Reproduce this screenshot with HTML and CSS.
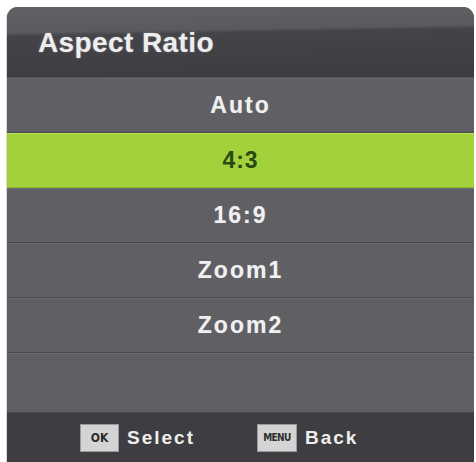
FILE: index.html
```html
<!DOCTYPE html>
<html>
<head>
<meta charset="utf-8">
<link rel="stylesheet" href="styles.css">
</head>
<body>
<div class="panel">
  <div class="header"><span class="title">Aspect Ratio</span></div>
  <div class="list">
    <div class="row">Auto</div>
    <div class="row selected">4:3</div>
    <div class="row">16:9</div>
    <div class="row">Zoom1</div>
    <div class="row">Zoom2</div>
    <div class="row empty"></div>
  </div>
  <div class="footer">
    <div class="hint"><span class="key key-ok">OK</span><span class="label">Select</span></div>
    <div class="hint"><span class="key key-menu">MENU</span><span class="label">Back</span></div>
  </div>
</div>
</body>
</html>
```

FILE: styles.css
```css
html, body {
  margin: 0;
  padding: 0;
  background: #ffffff;
}
body {
  font-family: "Liberation Sans", Arial, sans-serif;
  font-weight: bold;
  color: #f2f2f2;
}
.panel {
  margin: 7px 2px 0 7px;
  width: 467px;
  height: 455px;
  border-radius: 11px 11px 0 0;
  overflow: hidden;
  background: #5e5e62;
  display: flex;
  flex-direction: column;
  box-shadow: -1px 0 0 #d8d8d8;
}
.header {
  height: 70px;
  flex: none;
  display: flex;
  align-items: center;
  padding-left: 31px;
  background: linear-gradient(179deg, #626266 0%, #5a5a5e 33%, #444448 38%, #3d3d41 100%);
  border-bottom: 1px solid #505054;
}
.title {
  font-size: 28px;
  letter-spacing: 0.4px;
  color: #eeeeee;
  text-shadow: 0 0 2px rgba(255,255,255,0.35);
  margin-top: 2px;
}
.list {
  display: flex;
  flex-direction: column;
}
.row {
  height: 54px;
  flex: none;
  display: flex;
  align-items: center;
  justify-content: center;
  font-size: 23px;
  letter-spacing: 2px;
  color: #f0f0f0;
  border-bottom: 1px solid #4a4a4e;
  box-shadow: inset 0 1px 0 #6c6c70;
  background: #606064;
  text-shadow: 0 0 1px rgba(255,255,255,0.3);
}
.row.selected {
  background: #a3d13c;
  color: #2b4712;
  box-shadow: inset 0 1px 0 #b9e25a;
  border-bottom: 1px solid #8cb62c;
  letter-spacing: 1px;
  text-shadow: none;
}
.row.empty {
  height: 59px;
  border-bottom: none;
}
.footer {
  flex: 1;
  display: flex;
  align-items: center;
  background: #3e3e42;
  padding-left: 73px;
  gap: 62px;
  border-top: 1px solid #4a4a4e;
}
.hint {
  display: flex;
  align-items: center;
  gap: 8px;
}
.key {
  display: inline-flex;
  align-items: center;
  justify-content: center;
  height: 28px;
  background: #d4d4d4;
  border: 1px solid #9a9a9a;
  color: #2c2c2c;
  font-family: "DejaVu Sans Condensed", "DejaVu Sans", sans-serif;
  font-size: 12px;
  letter-spacing: 0;
  box-sizing: border-box;
}
.key-ok {
  width: 39px;
}
.key-menu {
  width: 40px;
  font-size: 10px;
  letter-spacing: -0.6px;
}
.label {
  font-size: 19px;
  letter-spacing: 2px;
  color: #eeeeee;
}
```
